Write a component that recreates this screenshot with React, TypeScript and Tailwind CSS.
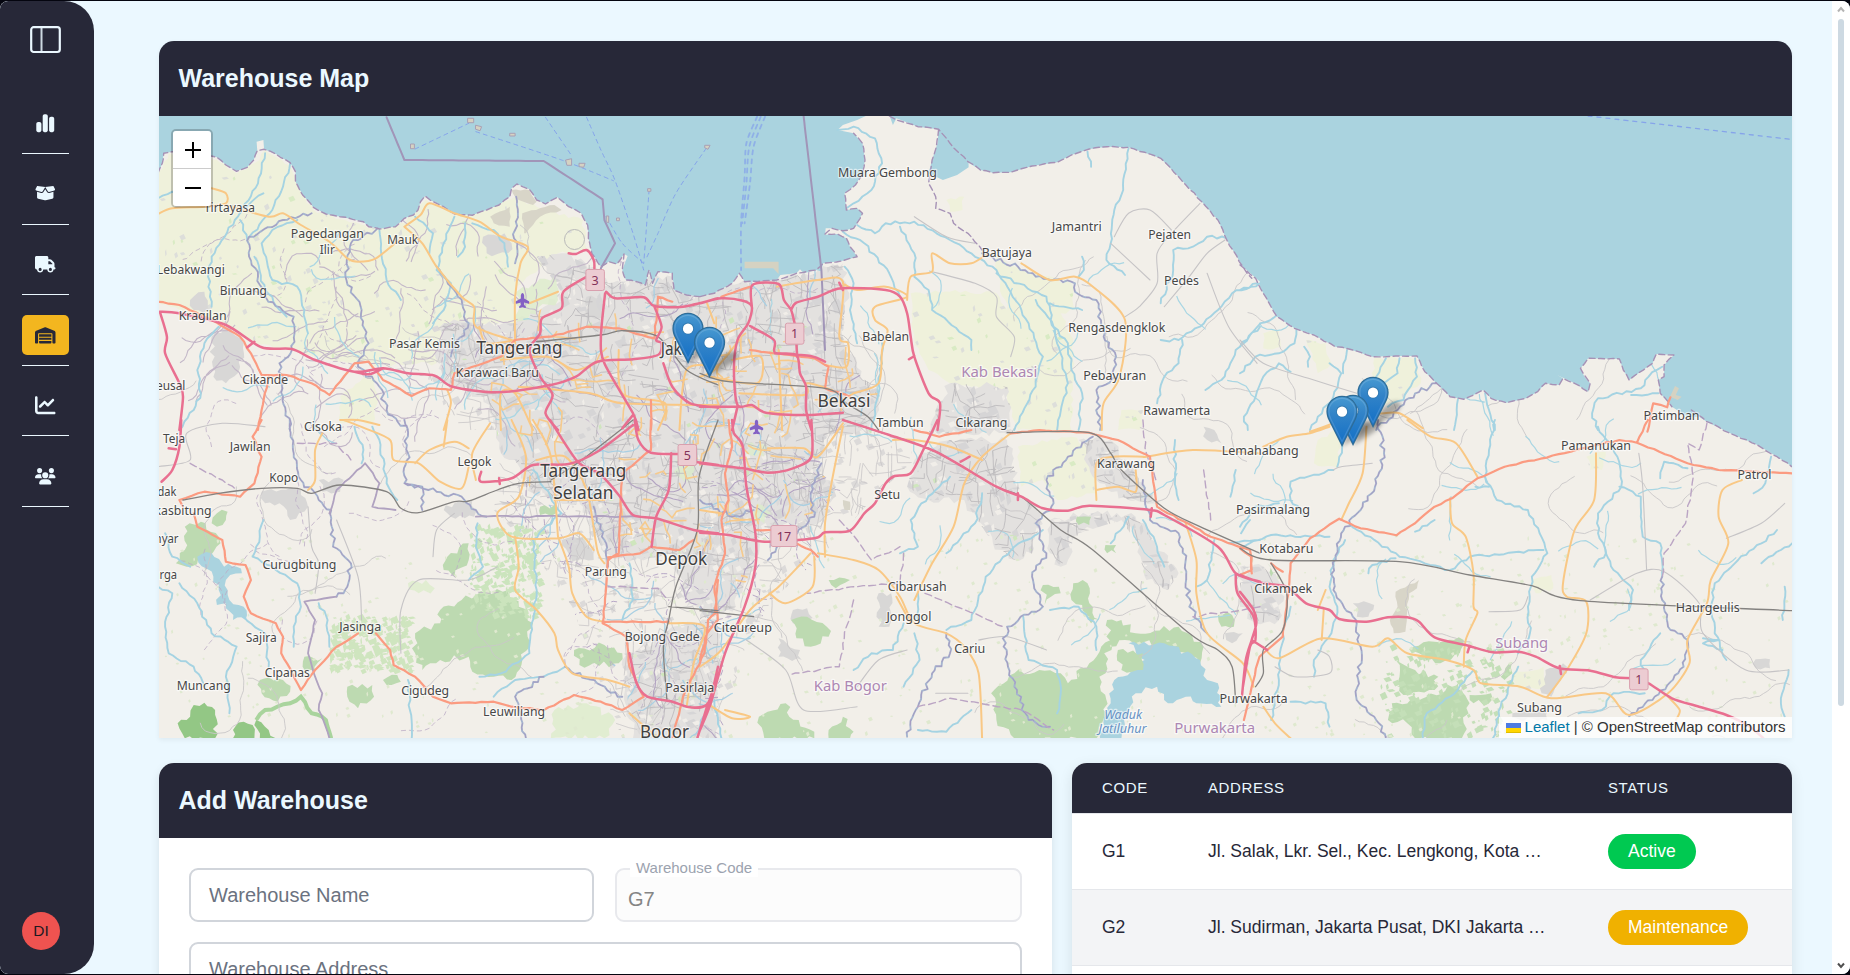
import React from "react";
import { FaChartSimple, FaBoxOpen, FaTruck, FaWarehouse, FaChartLine, FaUsers } from "react-icons/fa6";
import { FaPlane } from "react-icons/fa";

type Pt = [number, number];
type Sheet = "A" | "B" | "C" | "D" | "E" | "F";
type Shape = [Sheet, string];

/* The map is digitised in six sheets; each has its own origin and scale. */
const SHEETS: Record<Sheet, [number, number, number]> = {
  A: [-1, -6, 2.8],
  B: [541, -6, 2.8],
  C: [1081, -6, 2.57],
  D: [-1, 304, 2.8],
  E: [541, 304, 2.8],
  F: [1081, 304, 2.57],
};

function toPoints([sheet, data]: Shape): Pt[] {
  const [ox, oy, s] = SHEETS[sheet];
  return data
    .trim()
    .split(/\s+/)
    .map((p) => {
      const [x, y] = p.split(",").map(Number);
      return [ox + x / s, oy + y / 3] as Pt;
    });
}

function rng(seed: number) {
  let s = seed;
  return () => {
    s = (s * 1664525 + 1013904223) % 4294967296;
    return s / 4294967296;
  };
}

const line = (pts: Pt[]) => "M" + pts.map(([x, y]) => x.toFixed(1) + " " + y.toFixed(1)).join("L");

function smooth(pts: Pt[]): string {
  let d = "M" + pts[0][0].toFixed(1) + " " + pts[0][1].toFixed(1);
  for (let i = 0; i < pts.length - 1; i++) {
    const a = pts[Math.max(0, i - 1)];
    const b = pts[i];
    const c = pts[i + 1];
    const e = pts[Math.min(pts.length - 1, i + 2)];
    const k = 7;
    d += `C${(b[0] + (c[0] - a[0]) / k).toFixed(1)} ${(b[1] + (c[1] - a[1]) / k).toFixed(1)} ${(c[0] - (e[0] - b[0]) / k).toFixed(1)} ${(c[1] - (e[1] - b[1]) / k).toFixed(1)} ${c[0].toFixed(1)} ${c[1].toFixed(1)}`;
  }
  return d;
}

function wiggle(pts: Pt[], amp: number, seed: number, step = 6): Pt[] {
  const r = rng(seed);
  const out: Pt[] = [pts[0]];
  for (let i = 1; i < pts.length; i++) {
    const [x0, y0] = pts[i - 1];
    const [x1, y1] = pts[i];
    const len = Math.hypot(x1 - x0, y1 - y0);
    const n = Math.max(1, Math.round(len / step));
    for (let j = 1; j <= n; j++) {
      const t = j / n;
      const o = j === n ? 0 : (r() - 0.5) * 2 * amp;
      out.push([x0 + (x1 - x0) * t - ((y1 - y0) / (len || 1)) * o, y0 + (y1 - y0) * t + ((x1 - x0) / (len || 1)) * o]);
    }
  }
  return out;
}

const fills = (shapes: Shape[]) => shapes.map((s) => line(toPoints(s)) + "Z").join("");
const roughFills = (shapes: Shape[], amp: number, step = 5) =>
  shapes
    .map((s, i) => {
      const p = toPoints(s);
      return line(wiggle([...p, p[0]], amp, i * 37 + 5, step)) + "Z";
    })
    .join("");
const lines = (shapes: Shape[]) => shapes.map((s) => smooth(toPoints(s))).join("");
const rough = (shapes: Shape[], amp: number, step = 6) =>
  shapes.map((s, i) => line(wiggle(toPoints(s), amp, i * 91 + 17, step))).join("");

const COAST: Shape[] = [
  ["A", "0,190 12,160 16,130 40,125 100,130 165,142 190,165 220,184 250,172 268,150 278,122 276,95 295,90 297,118 330,132 370,158 385,185 385,215 405,255 435,292 470,312 510,320 545,328 575,335 590,350 620,357 665,350 690,325 715,315 728,300 735,275 748,258 762,270 800,290 830,312 880,316 920,300 955,285 985,260 990,235 1005,222 1040,238 1060,270 1085,282 1118,262 1150,290 1185,310 1203,345 1205,385 1215,430 1240,470 1262,455 1285,462 1305,432 1315,438 1300,480 1310,510 1340,515 1365,525 1375,480 1385,520 1400,485 1440,490 1445,540 1480,555 1520,560 1568,548 1568,970 0,970"],
  ["B", "0,560 40,550 65,535 90,520 110,490 125,515 160,515 215,510 225,495 270,490 280,478 290,490 325,480 340,485 345,460 400,452 440,440 420,410 410,385 385,372 350,374 352,355 370,355 400,362 430,355 440,340 455,310 440,295 410,300 405,250 435,225 455,190 462,150 455,100 430,70 385,60 400,45 440,30 470,15 530,15 540,45 550,25 610,50 668,58 665,100 650,150 640,190 680,210 720,195 752,172 752,158 785,180 820,188 870,187 930,168 1000,157 1040,135 1090,117 1140,110 1200,112 1290,145 1340,200 1405,275 1450,330 1475,390 1520,470 1568,515 1568,970 0,970"],
  ["C", "0,465 15,480 40,505 60,550 95,620 140,655 190,675 245,710 280,717 340,740 400,738 455,738 475,785 505,820 540,860 575,868 600,855 625,840 645,865 685,878 735,865 765,845 785,820 820,825 830,805 815,795 860,820 895,845 900,820 885,800 875,775 895,745 975,747 985,780 1000,810 1060,760 1070,732 1115,735 1090,765 1090,800 1075,810 1080,850 1110,890 1150,920 1195,940 1250,968 0,970"],
  ["D", "0,-10 1568,-10 1568,960 0,960"],
  ["E", "0,-10 1568,-10 1568,960 0,960"],
  ["F", "0,-10 1180,-10 1200,5 1260,40 1330,75 1380,110 1430,148 1430,960 0,960"],
];

const COAST_LINES: Shape[] = [
  ["A", "0,190 12,160 16,130 40,125 100,130 165,142 190,165 220,184 250,172 268,150 278,122 297,118 330,132 370,158 385,185 385,215 405,255 435,292 470,312 510,320 545,328 575,335 590,350 620,357 665,350 690,325 715,315 728,300 735,275 748,258 762,270 800,290 830,312 880,316 920,300 955,285 985,260 990,235 1005,222 1040,238 1060,270 1085,282 1118,262 1150,290 1185,310 1203,345 1205,385 1215,430 1240,470 1262,455 1285,462 1305,432 1300,480 1310,510 1340,515 1365,525 1375,480 1385,520 1400,485 1440,490 1445,540 1480,555 1520,560"],
  ["B", "0,560 40,550 65,535 90,520 110,490 125,515 215,510 270,490 325,480 345,460 400,452 440,440 420,410 410,385 385,372 350,372 370,355 400,362 430,355 455,310 440,295 410,300 405,250 435,225 455,190 462,150 455,100 430,70"],
  ["B", "530,18 550,30 610,50 668,58 700,100 750,155 785,180 820,188 870,187 930,168 1000,157 1040,135 1090,117 1140,110 1200,112 1290,145 1340,200 1405,275 1450,330 1475,390 1520,470 1545,505"],
  ["B", "668,58 662,110 650,150 640,220 660,260 660,295 700,310 710,340 750,370 790,420"],
  ["C", "0,465 40,505 60,550 95,620 140,655 190,675 245,710 280,717 340,740 400,738 455,738 475,785 505,820 540,860 575,868 600,855 625,840 645,865 685,878 735,865 765,845 785,820 820,825 830,805 860,820 895,845 900,820 875,775 895,745 975,747 985,780 1000,810 1060,760 1070,732 1115,735 1090,765 1090,800 1075,810 1080,850 1110,890"],
  ["F", "1160,-30 1200,5 1260,40 1330,75 1380,110 1430,148"],
];

const FARM: Shape[] = [
  ["A", "0,200 30,130 165,150 220,190 270,160 300,120 370,165 385,215 435,300 590,355 690,340 750,270 830,318 1000,260 1060,290 1190,330 1200,420 1120,430 1000,530 1000,640 880,640 800,640 780,760 640,765 560,760 440,740 370,715 270,700 190,640 60,600 0,575"],
  ["A", "510,860 600,790 620,860 600,940 510,940"],
  ["B", "590,550 700,545 830,550 860,600 830,480 830,440 900,480 1000,510 1040,520 1050,600 1010,610 1045,700 1040,960 890,960 860,860 760,830 700,820 640,780 600,690"],
  ["B", "690,270 740,260 735,300 700,305"],
  ["B", "250,590 340,570 350,700 300,640"],
  ["E", "890,80 1040,50 1100,90 1110,220 1000,240 960,180 900,200"],
  ["C", "345,745 455,745 465,820 400,880 340,880"],
  ["C", "60,670 100,660 105,710 60,715"],
  ["C", "170,690 220,700 235,760 200,790"],
  ["F", "200,60 265,20 250,145 190,130"],
  ["F", "750,480 800,465 805,505 760,520"],
  ["F", "700,760 780,740 790,800 720,810"],
  ["F", "890,110 940,95 930,150 900,150"],
  ["B", "1180,900 1240,900 1230,960 1170,960"],
];

const URBAN: Shape[] = [
  ["A", "885,640 1000,640 1070,600 1130,545 1060,440 1130,430 1220,470 1260,520 1440,500 1568,560 1568,970 960,970 910,860 800,820 780,700 800,640"],
  ["B", "0,565 110,520 220,510 290,490 400,460 410,520 400,680 450,800 500,840 480,970 0,970"],
  ["D", "940,-10 1568,-10 1568,540 1480,560 1440,400 1330,420 1250,400 1190,260 1050,220 1000,120 960,100"],
  ["E", "0,-10 370,-10 330,150 380,200 340,300 180,330 150,430 100,560 0,600"],
  ["E", "600,120 700,60 860,60 900,230 960,280 930,400 880,420 820,370 740,240 640,240 580,200"],
  ["E", "980,300 1100,280 1220,290 1340,460 1310,510 1250,480 1230,380 1180,300 1060,340 1010,440 980,400"],
  ["E", "1060,60 1150,60 1280,250 1200,240 1120,190"],
  ["D", "1300,720 1440,620 1568,600 1568,955 1330,955"],
  ["B", "700,820 860,830 880,970 640,970 660,900"],
  ["F", "0,440 60,440 110,500 100,600 40,610 0,560"],
];

/* Looser suburbs around the built-up areas: streets, but no grey fill. */
const SUBURBS: Shape[] = [
  ["D", "960,100 1200,120 1330,380 1440,400 1568,400 1568,955 1300,955 1240,800 1160,560 1040,380 940,270"],
  ["E", "0,200 380,0 560,0 600,120 480,240 330,420 200,540 120,700 60,955 0,955"],
  ["A", "700,640 900,640 960,960 820,960 780,820 660,760"],
];

const GREY: Shape[] = [
  ["A", "150,680 200,650 240,700 230,770 190,820 155,800"],
  ["A", "90,570 130,545 140,600 100,600"],
  ["A", "910,380 970,370 990,400 980,430 920,430"],
  ["A", "1200,560 1240,560 1250,620 1200,630"],
  ["D", "290,215 400,210 420,260 370,300 340,250 300,250"],
  ["D", "830,250 880,240 885,290 820,290 800,270"],
  ["D", "450,180 520,180 510,215 460,215"],
  ["D", "1130,360 1190,350 1220,420 1160,425"],
  ["E", "220,655 280,690 285,720 220,710"],
  ["E", "500,520 535,520 530,620 500,620"],
  ["E", "1470,640 1520,640 1490,670"],
  ["E", "260,570 300,565 330,600 260,610"],
  ["F", "290,550 345,555 330,590 300,590"],
  ["F", "1325,718 1362,718 1362,745 1325,745"],
  ["F", "785,750 830,730 840,760 800,830 775,820"],
  ["F", "700,880 790,870 790,900 690,900"],
  ["E", "1410,20 1440,30 1460,70 1420,60"],
];

const BEIGE: Shape[] = [
  ["A", "990,240 1040,240 1060,275 1050,285 1010,270 1000,260"],
  ["A", "1020,310 1110,285 1130,300 1070,320 1030,370 1025,370"],
  ["A", "930,320 985,290 985,350 940,340"],
  ["F", "400,515 460,480 455,505 435,520 430,570 425,635 395,640 385,600 405,560"],
  ["E", "400,240 420,245 420,270 405,270"],
];

const PIERS: Shape[] = [
  ["B", "125,455 220,455 220,492 205,475 125,475"],
  ["C", "1105,860 1118,828 1128,835 1120,855 1135,860 1125,870"],
];

const FOREST: Shape[] = [
  ["D", "75,320 120,305 170,350 175,370 130,410 80,440 50,430 75,390"],
  ["D", "150,310 165,280 195,275 190,300 165,320"],
  ["D", "790,570 850,540 920,520 980,510 1010,560 1050,610 1020,720 990,780 940,770 880,755 870,710 790,720 740,750 720,700 720,640 790,610"],
  ["D", "530,800 600,795 605,830 560,865 530,830"],
  ["D", "285,780 350,780 370,815 335,845 290,820"],
  ["D", "1165,690 1250,675 1300,700 1290,730 1180,735"],
  ["D", "810,410 870,370 870,420 830,470 800,450"],
  ["D", "630,780 670,765 680,785 640,795"],
  ["D", "410,710 460,715 440,760 405,740"],
  ["D", "1070,260 1110,255 1115,280 1070,285"],
  ["E", "255,600 300,590 355,620 360,650 310,680 270,655"],
  ["E", "960,495 1005,500 1010,520 965,555"],
  ["E", "1045,490 1085,490 1090,550 1120,600 1095,610 1070,555 1040,540"],
  ["E", "815,820 880,760 950,750 1010,760 1030,790 1110,710 1150,660 1120,800 1140,880 1110,955 880,955 830,900"],
  ["E", "1140,600 1180,600 1220,640 1340,620 1410,680 1400,730 1310,680 1190,660 1150,680"],
  ["E", "1450,585 1490,585 1495,620 1460,620"],
  ["E", "165,890 240,850 250,890 320,935 320,955 180,955"],
  ["E", "360,930 400,890 430,935 420,955 360,955"],
  ["E", "360,480 420,480 380,505"],
  ["E", "1055,290 1095,290 1090,315 1060,315"],
  ["E", "1135,375 1165,375 1165,400 1140,400"],
  ["F", "445,680 500,665 575,660 565,700 515,730 460,700"],
  ["F", "400,720 450,750 510,770 500,810 420,825 410,770"],
  ["F", "390,850 480,830 560,790 590,850 570,955 450,955 430,910 380,900"],
  ["F", "670,770 700,725 700,760 680,780"],
  ["F", "590,825 645,820 640,850 600,850"],
  ["F", "70,430 100,460 80,470"],
];

const LIGHT_GREEN: Shape[] = [
  ["D", "1110,870 1200,850 1280,900 1250,955 1100,955"],
  ["D", "1450,120 1500,130 1490,180 1455,170"],
  ["D", "700,490 750,480 775,505 730,520"],
  ["E", "130,70 190,80 180,110 130,100"],
  ["A", "1000,550 1110,500 1120,570 1005,635"],
  ["E", "160,250 200,280 180,310 150,300"],
];

const WATER_FILLS: Shape[] = [
  ["E", "1200,670 1300,670 1400,720 1420,780 1450,790 1460,860 1390,850 1360,830 1310,850 1280,800 1220,820 1200,870 1180,955 1120,955 1150,850 1160,780 1220,750 1245,720"],
  ["D", "110,410 150,400 185,440 220,440 235,460 190,480 200,540 240,560 245,600 210,600 190,550 165,555 170,510 155,470"],
];

const LAKE_ISLAND: Shape[] = [["E", "1170,690 1240,700 1240,750 1180,750"]];

const DARK_FOREST: Shape[] = [
  ["D", "55,910 90,890 100,855 130,848 160,870 160,955 75,955"],
  ["D", "210,930 240,905 265,915 270,955 210,955"],
  ["D", "275,900 310,930 330,955 285,955"],
];

const RIVERS: Shape[] = [
  ["A", "300,130 280,220 215,330 150,440 140,500 150,590"],
  ["A", "370,160 350,230 320,300 250,390 230,330"],
  ["A", "230,310 295,250"],
  ["A", "0,265 40,245 60,250"],
  ["A", "390,330 320,360 290,400 320,510 390,530 410,600 420,670"],
  ["A", "360,620 300,540 270,440"],
  ["A", "620,360 625,430 640,510 680,570"],
  ["A", "830,320 800,400 780,480 820,520 800,600 770,640"],
  ["A", "880,340 940,360 970,400 980,470"],
  ["A", "720,320 770,370 760,430"],
  ["A", "860,340 860,410 840,440"],
  ["A", "170,650 130,700 110,780 120,850 100,900 60,960"],
  ["B", "385,60 430,50 490,85 510,160 480,240 430,280 410,295"],
  ["B", "1085,125 1095,170"],
  ["B", "1200,115 1185,240 1160,300 1150,400 1138,450 1190,495"],
  ["B", "440,345 490,370 520,340 600,335 700,390 830,480 900,600 960,740 940,830 880,960"],
  ["B", "400,365 460,400 530,490 560,560"],
  ["B", "560,350 600,430 600,500 640,540 650,600 760,690 760,720"],
  ["B", "830,490 970,560 1000,700 1030,820 1000,960"],
  ["B", "940,570 990,650 1030,700 1040,780 1070,850 1060,960"],
  ["B", "980,580 1070,600"],
  ["B", "1475,385 1420,380 1380,410 1325,420 1325,480 1290,580"],
  ["B", "1568,520 1490,550 1450,600 1400,650 1340,690 1290,690"],
  ["B", "1350,690 1340,760 1300,800 1280,880"],
  ["B", "1568,650 1500,720 1460,810 1415,840"],
  ["B", "405,470 430,520 420,600 440,700"],
  ["B", "1070,440 1075,480 1060,500"],
  ["B", "480,960 500,850 510,700"],
  ["C", "0,540 45,520"],
  ["C", "95,615 45,650 0,710"],
  ["C", "145,660 140,700 100,730 40,740 0,790"],
  ["C", "130,785 100,760 60,800 40,860 10,920 20,960"],
  ["C", "165,710 180,740 175,770"],
  ["C", "230,760 260,790 240,860 200,920 180,960"],
  ["C", "275,720 265,790"],
  ["C", "375,745 350,800"],
  ["C", "410,745 405,790 370,820"],
  ["C", "450,745 455,800 420,870 380,890"],
  ["C", "560,868 550,960"],
  ["C", "630,850 640,900 655,960"],
  ["C", "1085,770 1050,800 1030,835 920,865 905,910 920,960"],
  ["C", "1075,850 1005,855"],
  ["D", "600,20 620,60 640,190 670,240"],
  ["D", "550,20 575,90 570,130"],
  ["D", "295,300 285,350 265,410 330,450 390,490 400,560 380,620 380,680"],
  ["D", "0,500 40,520 20,620 30,700 100,740 130,800"],
  ["D", "60,490 110,550 150,640 220,680 190,770 200,880"],
  ["D", "240,590 300,640 310,740"],
  ["D", "450,550 475,600 480,680"],
  ["D", "895,310 890,380 910,440 870,480"],
  ["D", "1050,150 1130,280 1050,360 1060,480 1050,600 1040,700 960,760 900,770"],
  ["D", "700,780 710,960"],
  ["D", "940,830 1000,780 1080,770 1140,740"],
  ["D", "20,340 40,410 90,440"],
  ["D", "1320,430 1330,540 1300,600"],
  ["E", "700,170 620,250 590,300 610,380 560,400"],
  ["E", "790,220 770,310 690,400"],
  ["E", "960,330 880,380 800,470 760,600 690,630"],
  ["E", "610,520 610,600"],
  ["E", "570,610 540,690 480,700 430,750"],
  ["E", "600,640 615,720 570,800"],
  ["E", "980,570 1060,560 1110,620 1110,690"],
  ["E", "905,590 910,650 920,720 1000,750 1010,820 1000,880"],
  ["E", "1240,300 1270,350 1300,440"],
  ["E", "1200,290 1150,370"],
  ["E", "1440,360 1420,480 1390,500"],
  ["E", "1568,360 1480,370"],
  ["E", "1330,60 1330,160 1340,240"],
  ["E", "1500,150 1485,230"],
  ["E", "610,930 690,935 760,870"],
  ["E", "1540,300 1515,340"],
  ["E", "40,840 60,955"],
  ["F", "655,0 640,90 630,170 660,240 740,270 770,340 790,400 750,470 740,560 745,640 715,700"],
  ["F", "605,200 640,200"],
  ["F", "0,380 80,345 230,350"],
  ["F", "280,310 410,410 540,450 590,410 780,390"],
  ["F", "400,415 340,435 330,460"],
  ["F", "240,150 130,185 130,240 170,290"],
  ["F", "920,20 970,110 980,200 920,280 920,340 940,400 960,450 1010,510 1000,570"],
  ["F", "940,400 910,440"],
  ["F", "975,200 1030,230 1035,350 1080,370 1085,470"],
  ["F", "1080,175 1090,125 1150,145"],
  ["F", "1419,370 1390,390 1340,430"],
  ["F", "1380,330 1340,370 1280,420 1220,490 1210,560 1220,640 1250,720"],
  ["F", "1400,500 1395,600"],
  ["F", "1410,750 1390,850 1400,890"],
  ["F", "1040,820 960,820 930,870 870,880"],
  ["F", "270,360 240,420 230,500 250,560 235,640 190,720 190,770"],
  ["F", "130,560 110,640 100,780 80,900"],
  ["F", "130,845 220,850 230,920"],
  ["F", "600,750 540,830 480,880 470,955"],
  ["F", "715,740 670,860 650,955"],
  ["F", "500,300 450,335"],
  ["F", "1365,110 1350,190 1320,220"],
  ["F", "1190,655 1230,660 1190,670 1240,690"],
  ["F", "1080,640 1030,720 1040,760"],
  ["F", "100,250 40,260 0,320"],
  ["F", "270,40 250,140"],
];

const BORDERS: Shape[] = [
  ["A", "640,22 690,150 1080,153 1245,268 1250,330 1280,400 1240,475"],
  ["B", "290,18 340,480 350,720"],
];

const DISTRICTS: Shape[] = [
  ["A", "430,310 350,330 255,380 255,440 280,500 290,560 380,620 375,720 340,760 350,860 370,960"],
  ["A", "615,355 540,400 525,500 570,600 590,700 560,770 620,830 640,900 700,960"],
  ["A", "1003,260 1000,360 1000,460"],
  ["A", "780,470 840,560 870,640 820,740"],
  ["D", "370,0 380,100 400,180 450,240 485,270 490,380 540,430 530,500 500,530"],
  ["D", "690,0 700,100 690,190 740,200 740,270"],
  ["D", "690,190 780,215 850,230 890,270 920,290"],
  ["D", "1220,260 1250,360 1260,440"],
  ["D", "1140,740 1230,790 1300,830"],
  ["D", "1030,955 1000,830 1080,770"],
  ["B", "790,430 890,470 940,500 1050,520 1050,545 1110,570 1130,680 1165,740 1160,800 1110,840 1120,960"],
  ["E", "1100,50 1030,110 970,180 990,250 940,310 970,400 930,470 960,560 860,620 850,680 880,800 920,900 980,920"],
  ["E", "340,130 310,220 320,290 200,400 190,420"],
  ["E", "690,640 700,700 650,760 610,860 580,950"],
  ["E", "1240,180 1260,300 1340,340 1360,420 1370,560 1420,640"],
  ["E", "0,240 90,290 150,270"],
  ["F", "355,0 370,100 350,190 310,270 260,340 240,440 240,510 290,590 310,680 300,840 350,900 375,955"],
  ["F", "1085,470 1085,540 1100,620 1150,660 1140,740 1060,840 1000,890"],
  ["C", "505,820 450,850 405,900 350,960"],
];

const PLAIN_BORDERS: Shape[] = [
  ["D", "580,130 500,210 480,280"],
  ["D", "580,130 620,190 600,260 665,270"],
  ["D", "890,290 1350,290"],
  ["D", "410,545 500,530"],
  ["D", "410,545 440,600 420,700 440,770 460,820 450,870 480,955"],
];

const DASHED_BORDERS: Shape[] = [
  ["F", "1200,10 1180,90 1150,70 1165,170 1145,310 1090,400 1085,470"],
  ["E", "570,400 560,490 440,500 300,520"],
  ["E", "1568,560 1380,590"],
  ["E", "630,520 850,620"],
  ["E", "610,860 700,835 900,870 990,930"],
  ["E", "430,540 410,620 390,740 250,765"],
  ["E", "390,300 440,360 480,420 560,380"],
  ["E", "1410,150 1430,300"],
  ["E", "1240,0 1250,100 1280,190"],
  ["D", "1260,500 1400,505 1430,540"],
  ["D", "390,70 500,70 540,120"],
  ["D", "90,130 180,180 220,210"],
];

const MINOR: Shape[] = [
  ["B", "600,320 690,380 770,400"],
  ["B", "650,485 770,520 830,560 830,620 880,680 870,740"],
  ["B", "1400,280 1320,370 1280,430 1280,520 1230,590 1190,620"],
  ["B", "1150,400 1260,510"],
  ["B", "1160,380 1200,310 1260,300 1320,360"],
  ["B", "1470,390 1420,430 1370,500 1300,590"],
  ["B", "1560,760 1480,650 1420,490"],
  ["C", "0,690 60,760 190,810 300,850"],
  ["D", "0,140 90,120 80,40 180,10 300,20"],
  ["D", "420,260 430,380 450,430 440,520"],
  ["D", "500,300 560,470 570,600"],
  ["D", "680,700 680,570 730,480 870,480 950,440"],
  ["D", "770,410 780,330 830,280"],
  ["E", "780,660 860,650 970,690"],
  ["E", "440,800 500,720 580,690"],
  ["E", "130,660 240,750 290,870 440,860"],
  ["E", "660,820 750,820"],
  ["F", "1045,450 1035,200 1025,100"],
  ["F", "900,540 1020,460 1090,455 1180,550 1190,640 1300,750 1410,750"],
  ["F", "1250,355 1340,310 1400,250"],
  ["F", "340,130 260,140 240,150"],
  ["F", "640,575 720,570 740,530"],
  ["F", "200,690 230,710 230,760 140,770 90,740"],
];

const RAIL: Shape[] = [
  ["A", "1060,695 1240,675 1300,662 1400,680 1480,780 1568,825"],
  ["D", "70,240 170,220 290,205 390,205 430,220 510,195 640,215 680,265 730,278 830,245 870,243 950,210 1010,190 1100,185"],
  ["D", "1330,0 1180,125 1100,180"],
  ["D", "1568,0 1515,170 1510,330 1450,500 1430,600 1415,680 1425,840"],
  ["D", "1430,560 1568,572"],
  ["B", "0,790 80,815 350,835 410,880 470,920 500,960"],
  ["E", "400,0 530,45 660,95 830,200 900,230 1010,330 1100,390 1370,640 1450,690 1490,740 1500,850"],
  ["E", "860,38 1090,38 1150,100 1180,150 1300,265 1400,320 1568,400"],
  ["F", "0,385 80,420 410,425 590,465 750,497 875,542 1419,572"],
  ["F", "80,430 120,520 110,630 60,690 60,760 40,800"],
  ["E", "0,572 150,590"],
];

const PRIMARY: Shape[] = [
  ["A", "0,312 40,295 130,290 190,280 190,250 150,235"],
  ["A", "190,285 310,320 350,310 400,345 480,395 530,445 560,455 610,445 680,385"],
  ["A", "690,350 735,315 760,280 830,310 900,335 960,380 1035,410 1015,460 1000,560 1000,700"],
  ["A", "690,350 740,400 780,470 850,560 885,590 890,650 990,690"],
  ["A", "1120,545 1040,580"],
  ["A", "960,750 1090,740 1170,780 1260,740"],
  ["A", "960,960 960,850 1000,850 1050,960"],
  ["A", "1010,830 1210,850 1300,880 1568,885"],
  ["A", "1290,720 1300,850 1420,880 1400,960"],
  ["A", "1460,960 1480,780 1568,770"],
  ["A", "510,930 560,930 620,945"],
  ["A", "800,960 820,880 810,840"],
  ["A", "900,650 920,700 1000,690"],
  ["B", "215,530 330,510 400,515 390,680 415,700 410,770 350,765"],
  ["B", "400,520 440,540 520,530 580,560 490,590 490,630 525,660 510,720 500,820 430,850 400,870"],
  ["B", "580,570 590,500 650,485 650,430 700,460 760,460 800,435"],
  ["B", "900,460 980,510 1050,500 1100,530 1190,630 1175,800 1130,880 1125,960"],
  ["B", "0,800 40,780 110,690"],
  ["B", "90,750 170,740 160,820 30,800"],
  ["B", "110,850 290,855 300,820 370,840"],
  ["B", "20,580 40,640"],
  ["B", "220,720 230,960"],
  ["D", "520,0 580,25 650,60 660,120 730,130 790,185 850,205 870,140"],
  ["D", "460,40 440,90 440,180 420,210"],
  ["D", "720,130 760,90 830,65 870,85"],
  ["D", "800,80 810,0"],
  ["D", "890,180 880,100 930,10"],
  ["D", "990,0 1030,110 1010,230 950,280 990,350 1120,355 1180,340 1220,390"],
  ["D", "1000,350 1010,440 1000,510 1060,570 1110,640 1120,690 1160,760 1260,780 1320,800"],
  ["D", "1120,350 1150,440 1160,520 1200,590 1250,605"],
  ["D", "1110,240 1250,240"],
  ["D", "1060,120 1140,110 1200,210 1230,390 1250,430"],
  ["D", "1050,0 1100,110 1120,350"],
  ["D", "1430,610 1530,620 1500,730 1480,860"],
  ["D", "1320,880 1400,955"],
  ["E", "400,20 370,180 350,310 350,410"],
  ["E", "190,85 290,85 330,110 400,10"],
  ["E", "330,400 430,420 500,450 560,530 600,610 690,640 740,680 780,760 790,955"],
  ["E", "310,400 220,500 140,570 60,690 0,740"],
  ["E", "320,410 315,500 240,550 195,520"],
  ["E", "870,40 790,110 740,190 710,320 650,430 600,540"],
  ["E", "540,60 600,60 700,80 790,120"],
  ["E", "1110,240 1110,130 1160,110 1240,110 1250,110 1380,90 1568,100"],
  ["E", "1110,210 1170,200 1220,215 1220,150"],
  ["E", "1360,310 1390,420 1390,520 1420,640 1520,730 1550,800"],
  ["E", "20,850 90,895 140,890 70,870"],
  ["E", "550,530 590,610"],
  ["E", "0,270 60,280"],
  ["C", "180,965 240,940 290,920 370,910 410,910 470,955"],
  ["F", "60,80 120,50 180,40 230,20"],
  ["F", "430,0 490,50 555,70 610,170"],
  ["F", "325,20 315,160 280,250 260,300"],
  ["F", "540,235 545,310 580,350 600,460 600,560 610,580 580,660 575,740"],
  ["F", "915,100 910,240 860,330 830,490 840,530 890,545 890,640 840,750 790,830"],
  ["F", "1290,180 1240,210 1230,290 1255,370 1210,480 1200,550 1150,660 1155,730 1100,820 1000,885 940,820 800,835 720,800 620,790 600,750 530,720 430,700 380,655 340,680 210,655 100,715 60,680"],
  ["F", "1100,830 1130,870 1120,900"],
  ["F", "200,570 220,510"],
  ["F", "215,570 210,660"],
  ["F", "60,860 90,910 130,955"],
];

const TRUNK: Shape[] = [
  ["A", "0,575 60,585 150,630 230,680 260,730 290,795 360,795 430,820 480,855 550,760 590,755 630,810 710,858 760,835 820,840 830,790 960,740 1000,690 1100,680 1200,650 1290,655 1390,685 1400,560 1440,575"],
  ["A", "310,800 290,900 280,960"],
  ["A", "1380,870 1380,960"],
  ["B", "60,560 140,530"],
  ["B", "140,720 250,735 320,745 360,770 350,835 420,860"],
  ["D", "290,0 265,50 290,110 270,190 230,230 130,215 60,240 70,260"],
  ["D", "100,280 110,320 180,360 190,425 245,435 260,480 240,530 260,580 330,610 350,650 345,700 400,810 440,750 500,680 560,640"],
  ["D", "610,640 650,690 660,735 720,770 770,830 820,850 940,845 990,860 1080,870 1165,825 1240,845 1300,870 1360,830"],
  ["D", "1380,0 1380,90 1300,160 1290,400 1260,420 1255,500 1245,610 1310,650 1320,740 1360,830"],
  ["D", "1260,412 1350,400 1380,380 1460,390 1500,360"],
  ["D", "1245,605 1430,605"],
  ["D", "1568,480 1560,580 1540,600 1530,700 1470,830 1440,955"],
  ["E", "80,0 90,80 70,160 80,240 60,300 70,400 40,500 50,600 20,640 0,720"],
  ["E", "600,30 670,50 760,30"],
  ["E", "870,40 950,30 1090,38 1170,60 1260,110 1280,260 1430,350 1540,390 1545,460"],
  ["E", "155,330 200,330"],
  ["E", "270,370 310,390 330,410"],
  ["F", "1048,0 1020,68 1150,130 1230,150 1419,160"],
  ["F", "1020,68 975,60 915,75 850,95 680,140 610,175 545,235 500,260 450,310 402,346 310,325 255,296 180,355 130,430 120,560 110,650 50,710 30,800 10,900"],
  ["C", "1047,965 1062,880 1098,892 1106,862"],
  ["F", "0,385 30,410 30,450 0,465"],
  ["F", "80,430 110,455"],
];

const MOTORWAY: Shape[] = [
  ["A", "5,605 60,610 190,645 290,712 375,717 440,750 550,785 630,775 700,790 775,797 825,830 950,847 1100,825 1170,800 1230,755 1330,748 1400,735 1410,700 1395,690 1410,650 1390,590"],
  ["A", "5,605 25,680 20,730 60,820 70,860 60,960"],
  ["A", "1150,430 1170,432 1200,420 1220,450 1222,475"],
  ["A", "1200,500 1135,545 1130,595 1075,625 1070,670 1040,720 1070,800 1105,855 1085,910 1120,960"],
  ["A", "1255,545 1280,565 1360,562 1390,588 1470,590 1568,565"],
  ["A", "1252,550 1240,680 1250,760 1330,910 1345,960"],
  ["A", "1415,760 1440,830 1490,880 1568,893"],
  ["A", "250,712 270,695"],
  ["A", "550,785 590,793 630,775"],
  ["A", "1300,955 1330,915"],
  ["B", "0,580 60,565 120,572 145,590 135,640 105,690 95,780 105,885 145,885 185,908 300,915 400,908"],
  ["B", "145,590 147,525 220,522 235,570 255,600 265,640"],
  ["B", "255,600 270,578 330,560 395,535 520,540 560,560 580,610 590,680 600,740 640,850 672,880 665,960"],
  ["B", "140,648 207,690 210,728 270,735 280,790 297,830 297,900 312,960"],
  ["B", "210,730 310,738 350,755"],
  ["B", "270,700 272,740"],
  ["B", "390,518 400,540"],
  ["B", "585,748 600,738"],
  ["B", "0,890 105,890"],
  ["B", "105,890 90,960"],
  ["D", "65,0 60,80 40,150 10,185"],
  ["D", "30,85 50,88"],
  ["D", "1098,0 1175,125 1235,160 1290,225 1330,285 1395,295 1500,330 1568,340"],
  ["D", "905,155 905,185 990,175 1050,135 1150,132 1230,95 1330,15"],
  ["D", "955,175 957,192"],
  ["D", "1335,0 1345,60 1380,98 1470,102"],
  ["D", "1437,100 1430,210 1395,290 1382,380"],
  ["D", "1500,125 1568,135"],
  ["D", "1320,700 1340,790 1370,830 1440,845 1490,862 1540,850 1568,740"],
  ["D", "1540,850 1510,955"],
  ["E", "90,0 95,40 120,80 130,200 155,340 155,440 125,560 70,700 30,850 0,930"],
  ["E", "0,130 120,145 190,158 260,145 312,110 312,0"],
  ["E", "0,338 80,345 180,365 320,355 350,337 420,332 460,280 490,250 520,190 545,168 590,160 625,90 665,0"],
  ["E", "400,0 530,45 660,95 830,200 900,230 960,265 1030,272 1090,257 1260,270 1300,285 1450,380 1500,460 1568,485"],
  ["E", "1500,460 1505,520 1550,590 1555,660 1540,680 1520,800"],
  ["E", "730,125 755,110"],
  ["E", "890,220 890,240"],
  ["E", "1262,290 1265,265"],
  ["F", "0,465 60,490 120,500 170,550 230,570 255,597 325,605 380,592 430,592 460,605 500,652 580,675 650,697 715,695 760,710 820,745 900,752 965,772 1010,775 1050,790 1110,835 1180,860 1250,885 1310,920 1345,955"],
  ["F", "0,515 35,570 42,610 30,660 15,720 5,830"],
  ["F", "30,660 70,690"],
  ["F", "585,697 590,678"],
  ["F", "822,738 825,762"],
];

const FERRIES: Shape[] = [
  ["A", "720,117 870,40"],
  ["A", "890,65 1130,150 1275,212"],
  ["A", "1085,22 1160,140"],
  ["A", "1200,22 1240,120 1280,212 1330,370 1360,480"],
  ["A", "1375,240 1365,390 1360,460"],
  ["A", "1535,115 1450,250 1400,370 1365,450"],
  ["A", "1255,320 1300,400 1360,460"],
];

const LANES: Shape[] = [
  ["B", "160,20 130,100 125,200 115,340 115,480"],
  ["B", "170,20 138,110 130,220 118,340"],
  ["B", "182,20 150,110 140,220 125,340"],
];

const FAR_FERRY: Shape[] = [["C", "895,18 1415,88"]];

const ISLANDS: Shape[] = [
  ["A", "708,102 718,102 718,116 708,116"],
  ["A", "868,25 884,25 884,38 868,38"],
  ["A", "890,46 906,50 902,62 890,58"],
  ["A", "986,70 1000,70 1000,78 986,78"],
  ["A", "1142,150 1158,146 1158,166 1146,166"],
  ["A", "1180,160 1196,160 1192,172 1180,170"],
  ["A", "1532,106 1546,106 1540,118 1532,114"],
  ["A", "1372,236 1380,236 1380,244 1372,244"],
  ["A", "1285,324 1292,324 1292,332 1285,332"],
  ["A", "1256,318 1262,318 1262,338 1256,336"],
];

type Kind = "town" | "city" | "kab" | "lake";
const LABELS: [Sheet, number, number, string, Kind, number][] = [
  ["A", 200, 292, "Tirtayasa", "town", 51],
  ["A", 474, 372, "Pagedangan", "town", 73],
  ["A", 474, 419, "Ilir", "town", 15],
  ["A", 685, 389, "Mauk", "town", 31],
  ["A", 92, 480, "Lebakwangi", "town", 68],
  ["A", 239, 542, "Binuang", "town", 47],
  ["A", 125, 616, "Kragilan", "town", 48],
  ["A", 746, 700, "Pasar Kemis", "town", 71],
  ["A", 1012, 715, "Tangerang", "city", 86],
  ["A", 950, 788, "Karawaci Baru", "town", 83],
  ["A", 300, 808, "Cikande", "town", 46],
  ["A", 25, 827, "Ceusal", "town", 37],
  ["A", 1478, 718, "Jakarta", "city", 50],
  ["D", 462, 21, "Cisoka", "town", 38],
  ["D", 45, 57, "Teja", "town", 22],
  ["D", 258, 80, "Jawilan", "town", 41],
  ["D", 352, 173, "Kopo", "town", 29],
  ["D", 25, 214, "dak", "town", 19],
  ["D", 70, 273, "kasbitung", "town", 57],
  ["D", 24, 356, "nyar", "town", 24],
  ["D", 20, 464, "arga", "town", 24],
  ["D", 396, 435, "Curugbitung", "town", 74],
  ["D", 886, 124, "Legok", "town", 34],
  ["D", 1191, 154, "Tangerang", "city", 86],
  ["D", 1191, 219, "Selatan", "city", 60],
  ["D", 1465, 417, "Depok", "city", 52],
  ["D", 1254, 456, "Parung", "town", 42],
  ["D", 566, 620, "Jasinga", "town", 42],
  ["D", 289, 652, "Sajira", "town", 31],
  ["D", 362, 758, "Cipanas", "town", 45],
  ["D", 128, 797, "Muncang", "town", 54],
  ["D", 748, 811, "Cigudeg", "town", 48],
  ["D", 997, 876, "Leuwiliang", "town", 62],
  ["D", 1412, 649, "Bojong Gede", "town", 75],
  ["D", 1489, 804, "Pasirlaja", "town", 49],
  ["D", 1418, 937, "Bogor", "city", 49],
  ["B", 525, 188, "Muara Gembong", "town", 99],
  ["B", 1055, 351, "Jamantri", "town", 50],
  ["B", 1315, 374, "Pejaten", "town", 43],
  ["B", 859, 429, "Batujaya", "town", 50],
  ["B", 1348, 513, "Pedes", "town", 35],
  ["B", 1167, 652, "Rengasdengklok", "town", 97],
  ["B", 520, 680, "Babelan", "town", 47],
  ["B", 838, 786, "Kab Bekasi", "kab", 76],
  ["B", 1161, 797, "Pebayuran", "town", 63],
  ["B", 403, 873, "Bekasi", "city", 53],
  ["B", 1335, 902, "Rawamerta", "town", 67],
  ["B", 560, 939, "Tambun", "town", 47],
  ["B", 788, 939, "Cikarang", "town", 52],
  ["E", 524, 223, "Setu", "town", 26],
  ["E", 1193, 130, "Karawang", "town", 58],
  ["F", 52, 91, "Lemahabang", "town", 77],
  ["F", 85, 270, "Pasirmalang", "town", 74],
  ["E", 608, 500, "Cibarusah", "town", 59],
  ["E", 585, 589, "Jonggol", "town", 45],
  ["E", 120, 622, "Citeureup", "town", 58],
  ["E", 755, 685, "Cariu", "town", 31],
  ["E", 421, 798, "Kab Bogor", "kab", 73],
  ["E", 1185, 883, "Waduk", "lake", 38],
  ["E", 1183, 927, "Jatiluhur", "lake", 48],
  ["E", 1441, 923, "Purwakarta", "kab", 81],
  ["E", 1550, 837, "Purwakarta", "town", 68],
  ["C", 1109, 917, "Patimban", "town", 56],
  ["F", 915, 78, "Pamanukan", "town", 70],
  ["F", 1322, 163, "Patrol", "town", 34],
  ["F", 119, 387, "Kotabaru", "town", 54],
  ["F", 111, 507, "Cikampek", "town", 58],
  ["F", 1202, 563, "Haurgeulis", "town", 64],
  ["F", 724, 669, "Subang", "kab", 53],
  ["F", 770, 862, "Subang", "town", 45],
];

const SHIELDS: [Sheet, number, number, string][] = [
  ["A", 1224, 510, "3"],
  ["B", 265, 671, "1"],
  ["D", 1482, 105, "5"],
  ["E", 235, 348, "17"],
  ["F", 1025, 778, "1"],
];

const PINS: Pt[] = [
  [529, 247.8],
  [550.5, 261.8],
  [1214, 311.8],
  [1194, 329.8],
  [1183, 330.8],
];

const TEXT_STYLE: Record<Kind, { size: number; fill: string; italic?: boolean }> = {
  town: { size: 13.2, fill: "#474747" },
  city: { size: 17.5, fill: "#404040" },
  kab: { size: 15, fill: "#ad87b3" },
  lake: { size: 12.5, fill: "#6792c4", italic: true },
};

/* Street texture for the built-up areas. */
function streets(seed: number, count: number, box: [number, number, number, number]): string {
  const r = rng(seed);
  let d = "";
  for (let i = 0; i < count; i++) {
    let x = box[0] + r() * box[2];
    let y = box[1] + r() * box[3];
    let a = Math.floor(r() * 4) * (Math.PI / 2) + (r() - 0.5) * 0.5;
    d += `M${x.toFixed(1)} ${y.toFixed(1)}`;
    const n = 2 + Math.floor(r() * 4);
    for (let j = 0; j < n; j++) {
      x += Math.cos(a) * (4 + r() * 9);
      y += Math.sin(a) * (4 + r() * 9);
      a += (r() - 0.5) * 0.9 + (r() < 0.2 ? Math.PI / 2 : 0);
      d += `L${x.toFixed(1)} ${y.toFixed(1)}`;
    }
  }
  return d;
}

/* Long meandering tracks for the countryside. */
function tracks(seed: number, count: number, box: [number, number, number, number], n = 22): string {
  const r = rng(seed);
  let d = "";
  for (let i = 0; i < count; i++) {
    let x = box[0] + r() * box[2];
    let y = box[1] + r() * box[3];
    let a = r() * Math.PI * 2;
    d += `M${x.toFixed(1)} ${y.toFixed(1)}`;
    for (let j = 0; j < n; j++) {
      x += Math.cos(a) * 5;
      y += Math.sin(a) * 5;
      a += (r() - 0.5) * 1.1;
      d += `L${x.toFixed(1)} ${y.toFixed(1)}`;
    }
  }
  return d;
}

/* Small scattered blocks: villages, groves and fish ponds. */
function specks(seed: number, count: number, box: [number, number, number, number], size: number): string {
  const r = rng(seed);
  let d = "";
  for (let i = 0; i < count; i++) {
    const x = box[0] + r() * box[2];
    const y = box[1] + r() * box[3];
    const w = 1 + r() * size;
    const h = 1 + r() * size;
    d += `M${x.toFixed(1)} ${y.toFixed(1)}l${w.toFixed(1)} ${(-h / 2).toFixed(1)}l${(w / 2).toFixed(1)} ${h.toFixed(1)}l${(-w).toFixed(1)} ${(h / 2).toFixed(1)}Z`;
  }
  return d;
}

function Pin({ x, y }: { x: number; y: number }) {
  return (
    <g transform={`translate(${x - 15.6} ${y - 51}) scale(1.25)`}>
      <path d="M12.5 0C5.6 0 0 5.6 0 12.5c0 2.4.8 5.1 1.9 7.3L12.5 41l10.6-21.2c1.1-2.2 1.9-4.9 1.9-7.3C25 5.6 19.4 0 12.5 0z" fill="#2e6c97" />
      <path d="M12.5 1C6.1 1 1 6.1 1 12.5c0 2.2.8 4.8 1.8 6.9l9.7 19.4 9.7-19.4c1-2.1 1.8-4.7 1.8-6.9C24 6.1 18.9 1 12.5 1z" fill="url(#pin)" />
      <path d="M12.5 2C6.7 2 2 6.7 2 12.5c0 2 .7 4.5 1.7 6.5l8.8 17.6L21.3 19c1-2 1.7-4.5 1.7-6.5C23 6.7 18.3 2 12.5 2z" fill="none" stroke="#fff" strokeOpacity=".14" />
      <circle cx="12.5" cy="12.5" r="4.8" fill="#316f9f" fillOpacity=".6" />
      <circle cx="12.5" cy="12.7" r="4.1" fill="#fff" />
    </g>
  );
}

function MapCanvas() {
  const land = fills(COAST);
  return (
    <svg viewBox="0 0 1633 622" className="block h-[622px] w-[1633px]" fontFamily='"Noto Sans", sans-serif'>
      <defs>
        <clipPath id="land"><path d={land} /></clipPath>
        <clipPath id="urban"><path d={fills(URBAN)} /></clipPath>
        <clipPath id="suburbs"><path d={fills(SUBURBS)} /></clipPath>
        <clipPath id="farm"><path d={fills(FARM)} /></clipPath>
        <linearGradient id="pin" x1="0" y1="0" x2="0" y2="1">
          <stop offset="0" stopColor="#4799d1" />
          <stop offset=".35" stopColor="#3384c8" />
          <stop offset="1" stopColor="#126fc6" />
        </linearGradient>
        <filter id="soft" x="-50%" y="-50%" width="200%" height="200%"><feGaussianBlur stdDeviation="2.2" /></filter>
      </defs>
      <rect width="1633" height="622" fill="#aad3df" />
      <path d={land} fill="#f2efe9" />
      <g clipPath="url(#land)">
        <path d={roughFills(FARM, 2)} fill="#eff1db" />
        <g clipPath="url(#farm)">
          <path d={specks(5, 2000, [0, 0, 1633, 622], 4)} fill="#dddeda" />
          <path d={specks(9, 600, [0, 0, 1633, 622], 4)} fill="#d9ebc4" />
        </g>
        <path d={roughFills(URBAN, 4)} fill="#e3e1df" />
        <path d={roughFills(GREY, 3)} fill="#d8d7d6" />
        <g clipPath="url(#suburbs)">
          <path d={specks(71, 900, [240, 200, 520, 422], 6)} fill="#dcdad9" />
          <path d={streets(72, 700, [240, 200, 520, 422])} fill="none" stroke="#c9c6c8" strokeWidth=".8" />
          <path d={tracks(73, 45, [320, 320, 400, 302], 14)} fill="none" stroke="#b7a8c6" strokeWidth="1" strokeDasharray="6 3" />
          <path d={tracks(74, 22, [320, 320, 400, 302], 14)} fill="none" stroke="#a9cfe2" strokeWidth="1.3" />
        </g>
        <g clipPath="url(#urban)">
          <path d={specks(3, 2200, [270, 140, 940, 482], 8)} fill="#d6d5d6" />
          <path d={specks(31, 1100, [270, 140, 940, 482], 5)} fill="#f1eee9" />
          <path d={specks(37, 160, [270, 140, 700, 482], 4)} fill="#cfe6bd" />
        </g>
        <path d={roughFills(BEIGE, 1)} fill="#d8d5c8" />
        <path d={roughFills(LIGHT_GREEN, 4)} fill="#dceccb" fillOpacity=".8" />
        <path d={roughFills(FOREST, 3.5)} fill="#bddab1" />
        <path d={specks(12, 260, [170, 500, 80, 55], 5)} fill="#cfe5bf" />
        <path d={specks(14, 260, [310, 410, 70, 90], 5)} fill="#cbe4bd" />
        <path d={specks(15, 160, [1220, 530, 130, 90], 5)} fill="#c4dfb8" />
        <path d={specks(16, 700, [0, 420, 1633, 200], 2.5)} fill="#dfe9cf" />
        <path d={roughFills(DARK_FOREST, 3)} fill="#93c785" />
        <path d={rough([["D", "275,900 300,870 370,850 400,830 430,880 470,900 485,955"]], 2)} fill="none" stroke="#a9d49d" strokeWidth="4" />
        <path d={roughFills(WATER_FILLS, 3)} fill="#aad3df" />
        <path d={roughFills(LAKE_ISLAND, 3)} fill="#bddab1" />
        <path d={tracks(2, 70, [0, 120, 1633, 502])} fill="none" stroke="#c9c7c8" strokeWidth=".9" />
        <path d={tracks(44, 55, [0, 120, 600, 502], 14)} fill="none" stroke="#b9a9c4" strokeWidth="1" strokeDasharray="5 3" opacity=".75" />
        <path d={tracks(45, 60, [60, 140, 330, 170], 12)} fill="none" stroke="#c3b7c8" strokeWidth="1.1" />
        <path d={tracks(46, 26, [60, 150, 350, 150], 10)} fill="none" stroke="#a9d6e3" strokeWidth="1.3" />
        <path d={tracks(47, 60, [600, 150, 1000, 400], 9)} fill="none" stroke="#a9d6e3" strokeWidth="1.2" />
        <g clipPath="url(#urban)">
          <path d={streets(4, 1600, [270, 140, 940, 482])} fill="none" stroke="#bdbbbd" strokeWidth=".9" />
          <path d={tracks(61, 50, [290, 180, 420, 440], 14)} fill="none" stroke="#b3a4c2" strokeWidth="1.1" />
          <path d={tracks(62, 34, [290, 180, 420, 440], 14)} fill="none" stroke="#a9cfe2" strokeWidth="1.3" />
          <path d={streets(63, 110, [330, 210, 420, 250])} fill="none" stroke="#f6ca8c" strokeWidth="1.6" />
        </g>
      </g>
      <g fill="none" strokeLinejoin="round" strokeLinecap="round">
        <path d={rough(RIVERS, 1.5, 5)} stroke="#a5d3e2" strokeWidth="1.9" />
        <path d={lines(MINOR)} stroke="#c6c4c6" strokeWidth="1.1" />
        <path d={rough(DISTRICTS, 2.4, 4)} stroke="#a5b4cf" strokeWidth="1.9" />
        <path d={rough(DISTRICTS, 2.4, 4)} stroke="#a78bb8" strokeWidth="1" strokeDasharray="6 4" opacity=".6" />
        <path d={rough(PLAIN_BORDERS, 0.8)} stroke="#b0a2c0" strokeWidth="1.8" />
        <path d={rough(DASHED_BORDERS, 1)} stroke="#bba5c4" strokeWidth="1.4" strokeDasharray="7 4" />
        <path d={rough(COAST_LINES, 0.6)} stroke="#a692b6" strokeWidth="1.4" strokeDasharray="6 3.5" />
        <path d={rough(BORDERS, 0)} stroke="#a195b8" strokeWidth="2" />
        <path d={lines(FERRIES)} stroke="#86a4ea" strokeWidth="1" strokeDasharray="4 4" />
        <path d={lines(LANES)} stroke="#86a4ea" strokeWidth="1.8" strokeDasharray="4 5" strokeOpacity=".75" />
        <path d={lines(FAR_FERRY)} stroke="#86a4ea" strokeWidth="1.3" strokeDasharray="4 5" />
        <path d={fills(ISLANDS)} fill="#d5d2c2" stroke="#a9a0b4" strokeWidth="1" />
        <path d={fills(PIERS)} fill="#d5d2c2" />
        <path d={lines(PRIMARY)} stroke="#f9c885" strokeWidth="2" />
        <path d={rough(TRUNK, 0.6)} stroke="#fb9b81" strokeWidth="2.2" />
        <path d={lines(RAIL)} stroke="#848280" strokeWidth="1.3" />
        <path d={lines(MOTORWAY)} stroke="#e96f90" strokeWidth="2.5" />
      </g>
      <circle cx="415.5" cy="123.5" r="10" fill="none" stroke="#b9b9b9" />
      <g transform="rotate(-90 363.5 184.5)"><FaPlane x={356} y={177} size={15} color="#8461c4" /></g>
      <g transform="rotate(-90 597.5 311)"><FaPlane x={590} y={303.5} size={15} color="#8461c4" /></g>
      {LABELS.map(([sheet, x, y, text, kind, width], i) => {
        const [ox, oy, s] = SHEETS[sheet];
        const st = TEXT_STYLE[kind];
        return (
          <text
            key={i}
            x={ox + x / s}
            y={oy + y / 3 + st.size * 0.34}
            fontSize={st.size}
            fill={st.fill}
            fontStyle={st.italic ? "italic" : undefined}
            textAnchor="middle"
            textLength={width}
            lengthAdjust="spacingAndGlyphs"
            stroke="#fff"
            strokeOpacity=".6"
            strokeWidth="2.5"
            strokeLinejoin="round"
            paintOrder="stroke"
          >
            {text}
          </text>
        );
      })}
      {SHIELDS.map(([sheet, x, y, text], i) => {
        const [ox, oy, s] = SHEETS[sheet];
        const w = text.length > 1 ? 26 : 18.5;
        const cx = ox + x / s;
        const cy = oy + y / 3;
        return (
          <g key={i}>
            <rect x={cx - w / 2} y={cy - 10.5} width={w} height="21" rx="2" fill="#ecccd2" stroke="#d9a0ae" />
            <text x={cx} y={cy + 4.5} fontSize="12.5" fill="#84325a" textAnchor="middle">{text}</text>
          </g>
        );
      })}
      <g filter="url(#soft)" fill="#000" fillOpacity=".3">
        {PINS.map(([x, y], i) => (
          <path key={i} d={`M${x} ${y}l8 -18q10 -10 18 -8q6 4 -6 13z`} />
        ))}
      </g>
      {PINS.map(([x, y], i) => <Pin key={i} x={x} y={y} />)}
    </svg>
  );
}

const NAV = [
  { Icon: FaChartSimple, label: "Dashboard", active: false },
  { Icon: FaBoxOpen, label: "Products", active: false },
  { Icon: FaTruck, label: "Shipments", active: false },
  { Icon: FaWarehouse, label: "Warehouses", active: true },
  { Icon: FaChartLine, label: "Reports", active: false },
  { Icon: FaUsers, label: "Users", active: false },
];

function Sidebar() {
  return (
    <aside className="flex w-[94px] shrink-0 flex-col rounded-l-lg rounded-r-[30px] bg-[#272838] pl-[22px] text-[#ebf8ff]">
      <button className="mt-[24px] ml-[8px] h-[29px] w-[31px]" aria-label="Toggle sidebar">
        <svg viewBox="0 0 31 29" className="block h-[29px] w-[31px]" fill="none" stroke="currentColor">
          <rect x="1.2" y="2.2" width="28.6" height="24.8" rx="2.5" strokeWidth="2.2" />
          <path d="M11.5 2.5V27" strokeWidth="2" strokeOpacity=".85" />
        </svg>
      </button>
      <nav className="mt-[49px] flex w-[47px] flex-col">
        {NAV.map(({ Icon, label, active }) => (
          <div key={label} className="mb-[19.6px] border-b border-[#ebf8ff] pb-[10px]">
            <button
              aria-label={label}
              className={
                active
                  ? "flex h-[40px] w-full items-center justify-center rounded-[5px] bg-[#f3b61f] text-[#272838]"
                  : "flex h-[40px] w-full items-center justify-center rounded-[5px]"
              }
            >
              <Icon className="h-[20.5px] w-auto" />
            </button>
          </div>
        ))}
      </nav>
      <div className="mt-auto mb-[24px] flex h-[38px] w-[38px] items-center justify-center rounded-full bg-[#ef5350] text-[15.5px] text-[#1d1a22]">
        DI
      </div>
    </aside>
  );
}

function ZoomControl() {
  return (
    <div className="absolute top-[13px] left-[12px] flex w-[42px] flex-col rounded-[5px] border-2 border-black/20 bg-clip-padding">
      <button className="flex h-[38px] items-center justify-center rounded-t-[3px] border-b border-[#ccc] bg-white pl-px" aria-label="Zoom in">
        <svg viewBox="0 0 16 16" className="h-4 w-4" stroke="#000" strokeWidth="2"><path d="M0 8h16M8 0v16" /></svg>
      </button>
      <button className="flex h-[37px] items-center justify-center rounded-b-[3px] bg-white pl-px" aria-label="Zoom out">
        <svg viewBox="0 0 16 16" className="h-4 w-4" stroke="#000" strokeWidth="2"><path d="M0 8h16" /></svg>
      </button>
    </div>
  );
}

const ROWS = [
  { code: "G1", address: "Jl. Salak, Lkr. Sel., Kec. Lengkong, Kota …", status: "Active" },
  { code: "G2", address: "Jl. Sudirman, Jakarta Pusat, DKI Jakarta …", status: "Maintenance" },
];

export default function App() {
  return (
    <div className="flex h-[975px] w-full bg-[#04050f] py-px font-['Liberation_Sans',Arial,sans-serif]">
      <div className="flex h-full w-full overflow-hidden rounded-lg bg-[#ebf8ff]">
        <Sidebar />
        <main className="flex h-full flex-1 flex-col gap-[25px] overflow-hidden pt-[40px] pr-[40px] pl-[65px]">
          <section className="shrink-0 rounded-t-[15px] shadow-[0_2px_5px_rgba(0,0,0,0.06)]">
            <h2 className="flex h-[75px] items-center rounded-t-[15px] bg-[#272838] px-[19.5px] text-[25px] font-bold text-[#ebf8ff]">
              Warehouse Map
            </h2>
            <div className="relative h-[622px] overflow-hidden">
              <MapCanvas />
              <ZoomControl />
              <div className="absolute right-0 bottom-0 flex h-[21px] items-center bg-white/80 px-[6.5px] text-[15px] whitespace-pre text-[#333]">
                <svg viewBox="0 0 15 10" className="mr-[4px] h-[10px] w-[15px]">
                  <path fill="#4C7BE1" d="M0 0h15v5H0z" />
                  <path fill="#FFD500" d="M0 5h15v4H0z" />
                  <path fill="#E0BC00" d="M0 9h15v1H0z" />
                </svg>
                <span className="text-[#0078A8]">Leaflet</span> | © OpenStreetMap contributors
              </div>
            </div>
          </section>

          <div className="flex shrink-0 items-start gap-5">
            <section className="h-[260px] w-[893px] rounded-t-[15px] bg-white shadow-[0_4px_10px_rgba(0,0,0,0.1)]">
              <h2 className="flex h-[75px] items-center rounded-t-[15px] bg-[#272838] px-[19.5px] text-[25px] font-bold text-[#ebf8ff]">
                Add Warehouse
              </h2>
              <div className="grid grid-cols-[405px_1fr] gap-x-[21px] gap-y-[20px] px-[30px] pt-[30px]">
                <div className="flex h-[54px] items-center rounded-[9px] border-2 border-[#d1d5db] px-[18px] text-[20px] text-[#6b7280]">
                  Warehouse Name
                </div>
                <div className="relative flex h-[54px] items-center rounded-[9px] border-2 border-[#e8e9ed] bg-[#fcfcfc] px-[11px] pt-[8px] text-[20px] text-[#858585]">
                  <span className="absolute top-[-12px] left-[13px] bg-white px-[6px] text-[15px] leading-[19px] text-[#9ca3af]">
                    Warehouse Code
                  </span>
                  G7
                </div>
                <div className="col-span-2 flex h-[54px] items-center rounded-[9px] border-2 border-[#d1d5db] px-[18px] text-[20px] text-[#6b7280]">
                  Warehouse Address
                </div>
              </div>
            </section>

            <section className="h-[260px] flex-1 overflow-hidden rounded-t-[15px] bg-white shadow-[0_4px_14px_rgba(0,0,0,0.1)]">
              <div className="grid h-[51px] grid-cols-[106px_400px_1fr] items-center border-b border-[#e5e7eb] bg-[#272838] px-[30px] text-[15px] tracking-[0.6px] text-[#ebf8ff]">
                <span>CODE</span>
                <span>ADDRESS</span>
                <span>STATUS</span>
              </div>
              {ROWS.map((row, i) => (
                <div
                  key={row.code}
                  className={
                    i % 2
                      ? "grid h-[76px] grid-cols-[106px_400px_1fr] items-center border-b border-[#e5e7eb] bg-[#f3f4f6] px-[30px] text-[17.5px] text-[#272838]"
                      : "grid h-[76px] grid-cols-[106px_400px_1fr] items-center border-b border-[#e5e7eb] bg-white px-[30px] text-[17.5px] text-[#272838]"
                  }
                >
                  <span>{row.code}</span>
                  <span>{row.address}</span>
                  {row.status === "Active" ? (
                    <span className="flex h-[35px] items-center justify-self-start rounded-full bg-[#00c951] px-5 text-white">Active</span>
                  ) : (
                    <span className="flex h-[35px] items-center justify-self-start rounded-full bg-[#f0b100] px-5 text-white">Maintenance</span>
                  )}
                </div>
              ))}
            </section>
          </div>
        </main>
        <div className="flex w-[18px] shrink-0 flex-col items-center justify-between bg-white pt-[5px] pb-[5px]">
          <div className="flex flex-col items-center gap-[6px]">
            <svg viewBox="0 0 8 7" className="h-[7px] w-[8px]" fill="none" stroke="#b4b4b4" strokeWidth="2"><path d="M1 5.5 4 2l3 3.5" /></svg>
            <div className="h-[687px] w-[6px] rounded-full bg-[#cdd9e2]" />
          </div>
          <svg viewBox="0 0 8 7" className="h-[7px] w-[8px]" fill="none" stroke="#505050" strokeWidth="2"><path d="M1 1.5 4 5l3-3.5" /></svg>
        </div>
      </div>
    </div>
  );
}
